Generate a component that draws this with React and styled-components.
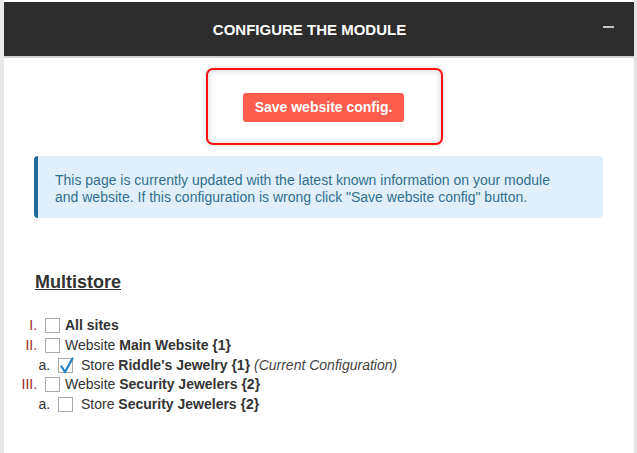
import React from "react";
import styled, { createGlobalStyle } from "styled-components";

const GlobalStyle = createGlobalStyle`
  html, body { margin: 0; padding: 0; background: #ffffff; }
  body { font-family: "Liberation Sans", Arial, sans-serif; color: #333333; }
  * { box-sizing: border-box; }
`;

const Frame = styled.div`
  min-height: 453px;
  padding-top: 2px;
  border-left: 4px solid #e9e9e9;
  border-right: 3px solid #e3e3e3;
  background: #ffffff;
`;

const Header = styled.header`
  height: 56px;
  display: flex;
  align-items: center;
  padding: 0 20px 0 12px;
  background: #2d2d2d;
  border-bottom: 2px solid #cfcfcf;
`;

const Title = styled.h1`
  flex: 1;
  margin: 0;
  text-align: center;
  color: #ffffff;
  font-size: 15px;
  font-weight: bold;
`;

const Collapse = styled.button`
  width: 11px;
  height: 2px;
  padding: 0;
  border: none;
  background: #c4c4c4;
  margin-top: -5px;
`;

const Content = styled.main`
  padding: 10px 31px 40px 30px;
`;

const ActionRow = styled.div`
  display: flex;
  justify-content: center;
  padding-left: 12px;
`;

const Highlight = styled.div`
  width: 237px;
  height: 77px;
  display: flex;
  align-items: center;
  justify-content: center;
  border: 2px solid #ff1010;
  border-radius: 7px;
  box-shadow: 0 0 5px rgba(0, 0, 0, 0.18), inset 0 0 6px rgba(0, 0, 0, 0.2);
  padding-top: 1px;
`;

const SaveButton = styled.button`
  height: 29px;
  padding: 0 12px;
  border: none;
  border-radius: 3px;
  background: #fd5d4d;
  color: #ffffff;
  font-family: "Liberation Sans", Arial, sans-serif;
  font-size: 14px;
  font-weight: bold;
  margin-left: -2px;
`;

const InfoBox = styled.div`
  margin-top: 11px;
  padding: 16px 40px 12px 17px;
  background: #e1effa;
  border-left: 4px solid #1d6a9b;
  border-radius: 4px;
  color: #31708f;
  font-size: 14px;
  line-height: 17px;
`;

const SectionTitle = styled.h2`
  margin: 54px 0 0 1px;
  font-size: 18px;
  font-weight: bold;
  text-decoration: underline;
  color: #333333;
  line-height: 21px;
`;

const SiteList = styled.ol`
  margin: 23px 0 0 0;
  padding-left: ${(p) => p.$indent}px;
  list-style-type: ${(p) => p.$type};
  font-size: 14px;
  line-height: 19.75px;
  color: #333333;

  & > li::marker {
    color: ${(p) => p.$markerColor};
  }
`;

const NestedList = styled(SiteList)`
  margin: 0;
`;

const Item = styled.li`
  white-space: nowrap;
`;

const Box = styled.span`
  display: inline-block;
  width: 15px;
  height: 15px;
  margin: 0 ${(p) => p.$gap}px 0 4px;
  vertical-align: -3px;
  border: 1px solid #a9a9a9;
  background: #ffffff;
  position: relative;

  svg {
    position: absolute;
    left: -1px;
    top: -2px;
    overflow: visible;
  }
`;

const Note = styled.em`
  color: #444444;
`;

function Checkbox({ checked, gap = 5 }) {
  return (
    <Box $gap={gap}>
      {checked && (
        <svg width="16" height="16" viewBox="0 0 16 16">
          <path
            d="M3.5 9.5 L7 15 L14.5 1.5"
            fill="none"
            stroke="#1f82c8"
            strokeWidth="2.2"
            strokeLinecap="round"
            strokeLinejoin="round"
          />
        </svg>
      )}
    </Box>
  );
}

export default function App() {
  return (
    <>
      <GlobalStyle />
      <Frame>
        <Header>
          <Title>CONFIGURE THE MODULE</Title>
          <Collapse aria-label="collapse" />
        </Header>
        <Content>
          <ActionRow>
            <Highlight>
              <SaveButton>Save website config.</SaveButton>
            </Highlight>
          </ActionRow>
          <InfoBox>
            This page is currently updated with the latest known information on your module
            and website. If this configuration is wrong click "Save website config" button.
          </InfoBox>
          <SectionTitle>Multistore</SectionTitle>
          <SiteList $type="upper-roman" $indent={7} $markerColor="#9c2b2b">
            <Item>
              <Checkbox />
              <b>All sites</b>
            </Item>
            <Item>
              <Checkbox />
              Website <b>Main Website {"{1}"}</b>
              <NestedList $type="lower-alpha" $indent={13} $markerColor="#333333">
                <Item>
                  <Checkbox checked gap={8} />
                  Store <b>Riddle's Jewelry {"{1}"}</b> <Note>(Current Configuration)</Note>
                </Item>
              </NestedList>
            </Item>
            <Item>
              <Checkbox />
              Website <b>Security Jewelers {"{2}"}</b>
              <NestedList $type="lower-alpha" $indent={13} $markerColor="#333333">
                <Item>
                  <Checkbox gap={8} />
                  Store <b>Security Jewelers {"{2}"}</b>
                </Item>
              </NestedList>
            </Item>
          </SiteList>
        </Content>
      </Frame>
    </>
  );
}
